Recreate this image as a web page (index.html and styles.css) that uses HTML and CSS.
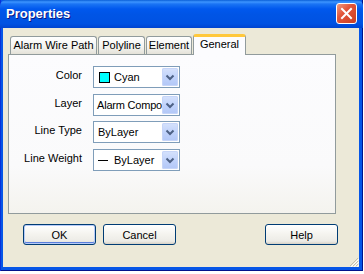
FILE: index.html
```html
<!DOCTYPE html>
<html lang="en">
<head>
    <meta charset="UTF-8">
    <title>Properties</title>
    <link rel="stylesheet" href="styles.css">
</head>
<body>
    <div class="window">
        <div class="titlebar">
            <span class="title">Properties</span>
            <span class="close-btn">
                <svg width="21" height="21" viewBox="0 0 21 21">
                    <path d="M6 6 L15 15 M15 6 L6 15" stroke="#fff" stroke-width="2" stroke-linecap="square"/>
                </svg>
            </span>
        </div>

        <div class="client">
            <div class="tabs">
                <div class="tab tab-alarm">Alarm Wire Path</div>
                <div class="tab tab-poly">Polyline</div>
                <div class="tab tab-elem">Element</div>
                <div class="tab tab-general selected">General</div>
            </div>

            <div class="panel">
                <div class="form">
                    <label>Color</label>
                    <div class="combo">
                        <span class="value"><span class="swatch"></span>Cyan</span>
                        <span class="drop"><svg width="16" height="18" viewBox="0 0 16 18"><path d="M4.5 7.5 L8 11 L11.5 7.5" fill="none" stroke="#4D6185" stroke-width="2"/></svg></span>
                    </div>

                    <label>Layer</label>
                    <div class="combo">
                        <span class="value narrow">Alarm Compo</span>
                        <span class="drop"><svg width="16" height="18" viewBox="0 0 16 18"><path d="M4.5 7.5 L8 11 L11.5 7.5" fill="none" stroke="#4D6185" stroke-width="2"/></svg></span>
                    </div>

                    <label>Line Type</label>
                    <div class="combo">
                        <span class="value">ByLayer</span>
                        <span class="drop"><svg width="16" height="18" viewBox="0 0 16 18"><path d="M4.5 7.5 L8 11 L11.5 7.5" fill="none" stroke="#4D6185" stroke-width="2"/></svg></span>
                    </div>

                    <label>Line Weight</label>
                    <div class="combo">
                        <span class="value"><span class="weight-line"></span>ByLayer</span>
                        <span class="drop"><svg width="16" height="18" viewBox="0 0 16 18"><path d="M4.5 7.5 L8 11 L11.5 7.5" fill="none" stroke="#4D6185" stroke-width="2"/></svg></span>
                    </div>
                </div>
            </div>

            <div class="buttons">
                <button class="btn default">OK</button>
                <button class="btn">Cancel</button>
                <button class="btn help">Help</button>
            </div>

            <!-- size grip -->
            <svg class="grip" width="12" height="12" viewBox="0 0 12 12">
                <path d="M11 3 L3 11 M11 6 L6 11 M11 9 L9 11" stroke="#C3BFAE" stroke-width="1"/>
                <path d="M12 4 L4 12 M12 7 L7 12 M12 10 L10 12" stroke="#fff" stroke-width="1"/>
            </svg>
        </div>
    </div>
</body>
</html>
```

FILE: styles.css
```css
body {
    margin: 0;
    background-color: #fff;
    font-family: "Liberation Sans", Arial, sans-serif;
    font-size: 11px;
    color: #000;
}

.window {
    width: 363px;
    height: 271px;
    display: flex;
    flex-direction: column;
    background-color: #0656E7;
    box-shadow: inset 1px 0 #0831D9, inset -1px -1px #00138C;
}

.titlebar {
    height: 28px;
    box-sizing: border-box;
    display: flex;
    justify-content: space-between;
    align-items: flex-start;
    padding: 3px 6px 0 6px;
    background: linear-gradient(#0A5FD8 0, #3D95FF 2px, #1A74F4 4px, #0058EE 9px, #0055E6 50%, #0052E2 85%, #0044D0 100%);
    border-radius: 6px 6px 0 0;
}

.title {
    color: #fff;
    font-weight: bold;
    font-size: 13px;
    line-height: 21px;
    text-shadow: 1px 1px #0A1883;
}

.close-btn {
    width: 21px;
    height: 21px;
    box-sizing: border-box;
    border: 1px solid #fff;
    border-radius: 3px;
    background: linear-gradient(135deg, #F09B81 0%, #E2553A 40%, #C93F22 100%);
    display: flex;
}

.close-btn svg {
    margin: -1px;
}

.client {
    flex: 1;
    margin: 0 4px 4px 3px;
    background-color: #ECE9D8;
    padding: 6px 0 0 5px;
    position: relative;
}

/* Tabs */
.tabs {
    display: flex;
    align-items: flex-end;
    gap: 1px;
    margin-left: 2px;
    height: 20px;
    position: relative;
    z-index: 1;
}

.tab {
    height: 18px;
    box-sizing: border-box;
    border: 1px solid #919B9C;
    border-bottom: none;
    border-radius: 3px 3px 0 0;
    background: linear-gradient(#FFFFFF, #F3F3EF 60%, #E4E2D8);
    text-align: center;
    line-height: 17px;
    font-size: 11px;
}

.tab-alarm { width: 87px; }
.tab-poly { width: 47px; }
.tab-elem { width: 46px; }

.tab-general {
    width: 53px;
}

.tab.selected {
    height: 21px;
    margin-bottom: -1px;
    background: #FCFCFE;
    border-top: 3px solid #FFC83C;
    line-height: 15px;
}

.panel {
    width: 328px;
    height: 160px;
    box-sizing: border-box;
    border: 1px solid #919B9C;
    background: linear-gradient(#FCFCFE 0%, #FAFAFB 70%, #F4F3EE 100%);
    padding-top: 11px;
}

.form {
    display: grid;
    grid-template-columns: 73px 87px;
    grid-auto-rows: 22px;
    column-gap: 11px;
    row-gap: 5.7px;
}

.form label {
    text-align: right;
    align-self: center;
    margin-top: -4px;
}

.combo {
    box-sizing: border-box;
    border: 1px solid #7F9DB9;
    background-color: #fff;
    display: flex;
    align-items: center;
    padding: 1px;
}

.value {
    flex: 1;
    overflow: hidden;
    white-space: nowrap;
    padding-left: 3px;
    display: flex;
    align-items: center;
}

.value.narrow {
    padding-left: 2px;
    letter-spacing: -0.2px;
}

.swatch {
    width: 11px;
    height: 11px;
    box-sizing: border-box;
    border: 1px solid #000;
    background-color: #00FFFF;
    margin: 0 4px 0 1px;
}

.weight-line {
    width: 10px;
    height: 1px;
    background-color: #000;
    margin: 0 6px 0 0;
}

.drop {
    width: 16px;
    height: 18px;
    box-sizing: border-box;
    border-radius: 2px;
    background: linear-gradient(#D6E2FC, #C1D3FB 50%, #B2C7F7);
    box-shadow: inset 0 0 0 1px #C6D5F8;
    display: flex;
}

/* Buttons */
.buttons {
    display: flex;
    gap: 7px;
    margin-top: 10px;
    padding: 0 21px 0 15px;
}

.btn {
    width: 73px;
    height: 21px;
    box-sizing: border-box;
    border: 1px solid #003C74;
    border-radius: 3px;
    background: linear-gradient(#FFFFFF, #F4F3EE 50%, #ECEBE6 85%, #D6D0C5);
    font-family: "Liberation Sans", Arial, sans-serif;
    font-size: 11px;
    color: #000;
    padding: 0;
}

.btn.default {
    box-shadow: inset 0 0 0 1px #B7CBF7, inset 0 -1px 0 1px #5A7EDC;
}

.btn.help {
    margin-left: auto;
}

.grip {
    position: absolute;
    right: 0;
    bottom: 0;
}
```
